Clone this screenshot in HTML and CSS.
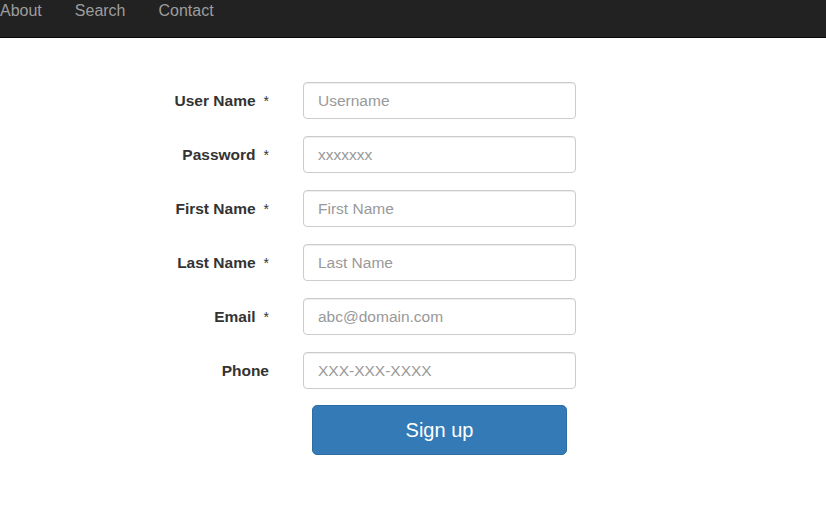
FILE: index.html
```html
<!DOCTYPE html>
<html>
<head>
<meta charset="utf-8">
<link rel="stylesheet" href="styles.css">
</head>
<body>
<nav class="navbar">
  <a class="nav-link" href="#">About</a>
  <a class="nav-link" href="#">Search</a>
  <a class="nav-link" href="#">Contact</a>
</nav>
<form class="signup">
  <label class="label" for="u">User Name<span class="req">*</span></label>
  <input class="field" id="u" type="text" placeholder="Username">
  <label class="label" for="p">Password<span class="req">*</span></label>
  <input class="field" id="p" type="text" placeholder="xxxxxxx">
  <label class="label" for="f">First Name<span class="req">*</span></label>
  <input class="field" id="f" type="text" placeholder="First Name">
  <label class="label" for="l">Last Name<span class="req">*</span></label>
  <input class="field" id="l" type="text" placeholder="Last Name">
  <label class="label" for="e">Email<span class="req">*</span></label>
  <input class="field" id="e" type="text" placeholder="abc@domain.com">
  <label class="label" for="ph">Phone</label>
  <input class="field" id="ph" type="text" placeholder="XXX-XXX-XXXX">
  <div class="spacer"></div>
  <button class="btn" type="button">Sign up</button>
</form>
</body>
</html>
```
FILE: styles.css
```css
html, body {
  margin: 0;
  padding: 0;
  background: #fff;
  font-family: "Liberation Sans", Arial, sans-serif;
}
.navbar {
  height: 37px;
  background: #222;
  border-bottom: 1px solid #080808;
  display: flex;
  align-items: flex-start;
  gap: 33px;
  padding: 0;
}
.nav-link {
  color: #9d9d9d;
  text-decoration: none;
  font-size: 16px;
  line-height: 22px;
}
.signup {
  display: grid;
  grid-template-columns: 119px 273px;
  column-gap: 34px;
  row-gap: 17px;
  margin: 44px 0 0 150px;
  align-items: center;
}
.label {
  text-align: right;
  font-weight: bold;
  font-size: 15.5px;
  line-height: 20px;
  color: #333;
}
.req {
  margin-left: 8px;
  font-size: 14px;
  font-weight: normal;
}
.field {
  box-sizing: border-box;
  width: 273px;
  height: 37px;
  border: 1px solid #ccc;
  border-radius: 4px;
  padding: 0 14px;
  font-family: "Liberation Sans", Arial, sans-serif;
  font-size: 15.5px;
  color: #555;
  box-shadow: inset 0 1px 1px rgba(0,0,0,0.075);
  outline: none;
}
.field::placeholder {
  color: #999;
}
.btn {
  margin: -1px 0 0 9px;
  width: 255px;
  height: 50px;
  background: #337ab7;
  border: 1px solid #2e6da4;
  border-radius: 5px;
  color: #fff;
  font-family: "Liberation Sans", Arial, sans-serif;
  font-size: 20px;
  cursor: pointer;
}
```
